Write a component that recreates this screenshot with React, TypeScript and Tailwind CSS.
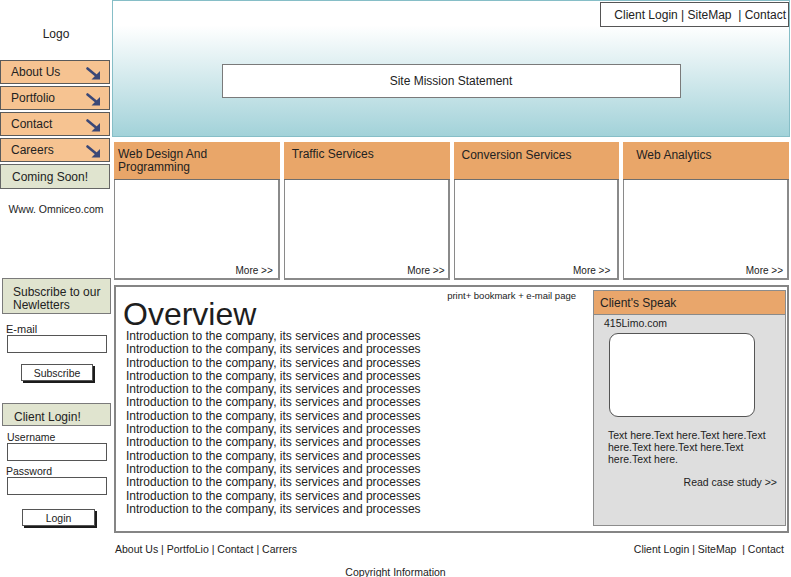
import React from 'react';

const navItems = ['About Us', 'Portfolio', 'Contact', 'Careers'];

const services = [
  { title: 'Web Design And Programming', head: 'pl-[4px] pr-[40px]', more: 'pr-[5px]' },
  { title: 'Traffic Services', head: 'pl-[8px]', more: 'pr-[3px]' },
  { title: 'Conversion Services', head: 'pl-[8px] pt-[7px]', more: 'pr-[7px]' },
  { title: 'Web Analytics', head: 'pl-[13px] pt-[7px]', more: 'pr-[4px]' },
];

const introLines = Array.from({ length: 14 }, () => 'Introduction to the company, its services and processes');

const NavArrow = () => (
  <svg width="15" height="13" viewBox="0 0 15 13" className="self-end mb-[3px]">
    <line x1="1.5" y1="1.5" x2="10" y2="8.5" stroke="#3b4877" strokeWidth="2.6" strokeLinecap="round" />
    <polygon points="14,4 14,12.5 5.5,12.5" fill="#3b4877" />
  </svg>
);

const Sidebar = () => (
  <aside className="w-[112px] shrink-0 flex flex-col text-[#222]">
    <div className="h-[60px] pt-[27px] text-center text-[12px] leading-[14px]">Logo</div>

    <nav className="flex flex-col gap-[2px]">
      {navItems.map((item) => (
        <a
          key={item}
          href="#"
          className="w-[110px] h-[24px] flex items-center justify-between pl-[10px] pr-[8px] bg-[#f6c391] border border-[#5a5a5a] text-[12px]"
        >
          <span>{item}</span>
          <NavArrow />
        </a>
      ))}
      <div className="w-[110px] h-[25px] flex items-center pl-[11px] bg-[#e0e4cf] border border-[#666] text-[12px]">
        Coming Soon!
      </div>
    </nav>

    <p className="mt-[14px] text-center text-[10.5px] leading-[12px]">Www. Omniceo.com</p>

    {/* newsletter signup */}
    <div className="mt-[63px] ml-[2px] w-[109px] h-[36px] pt-[7px] pl-[10px] bg-[#e0e4cf] border border-[#7a7a7a] text-[12px] leading-[13px]">
      Subscribe to our
      <br />
      Newletters
    </div>
    <label className="mt-[9px] ml-[6px] text-[11px] leading-[12px]">E-mail</label>
    <input className="ml-[7px] w-[100px] h-[18px] bg-white border border-[#555] outline-none" />
    <button className="mt-[11px] ml-[21px] w-[72px] h-[17px] bg-white border border-[#555] shadow-[2px_2px_0_#1c1c1c] text-[10.5px] leading-[14px]">
      Subscribe
    </button>

    {/* client login */}
    <div className="mt-[22px] ml-[2px] w-[109px] h-[23px] pt-[6px] pl-[11px] bg-[#e0e4cf] border border-[#7a7a7a] text-[12px] leading-[14px]">
      Client Login!
    </div>
    <label className="mt-[5px] ml-[7px] text-[10.5px] leading-[12px]">Username</label>
    <input className="ml-[7px] w-[100px] h-[18px] bg-white border border-[#555] outline-none" />
    <label className="mt-[4px] ml-[6px] text-[10.5px] leading-[12px]">Password</label>
    <input type="password" className="ml-[7px] w-[100px] h-[18px] bg-white border border-[#555] outline-none" />
    <button className="mt-[14px] ml-[22px] w-[73px] h-[17px] bg-white border border-[#555] shadow-[2px_2px_0_#1c1c1c] text-[10.5px] leading-[14px]">
      Login
    </button>
  </aside>
);

const Header = () => (
  <header className="h-[137px] flex flex-col border border-[#86bec7] bg-linear-to-b from-white from-[18%] to-[#a2d2d9]">
    <div className="flex justify-end mt-[1px]">
      <div className="w-[189px] h-[25px] flex items-center justify-end pr-[2px] border border-[#555] text-[12px] whitespace-pre">
        Client Login | SiteMap  | Contact
      </div>
    </div>
    <div className="mt-[37px] mx-auto w-[459px] h-[34px] flex items-center justify-center bg-white border border-[#7a7a7a] text-[12px]">
      Site Mission Statement
    </div>
  </header>
);

const ServiceCards = () => (
  <div className="mt-[5px] h-[138px] pl-[2px] pr-[1px] grid grid-cols-4 gap-[4px]">
    {services.map((s) => (
      <div key={s.title} className="flex flex-col">
        <div className={`h-[38px] pt-[6px] bg-[#e9a669] border-b border-[#6e6e6e] text-[12px] leading-[13px] ${s.head}`}>
          {s.title}
        </div>
        <div className={`flex-1 flex items-end justify-end pb-[1px] bg-white border-l border-r-2 border-b-2 border-[#8a8a8a] text-[10px] leading-[12px] ${s.more}`}>
          More &gt;&gt;
        </div>
      </div>
    ))}
  </div>
);

const ClientsSpeak = () => (
  <div className="w-[193px] mt-[3px] mb-[5px] mr-[1px] flex flex-col bg-[#dedede] border border-[#8c8c8c]">
    <div className="h-[24px] flex items-center pl-[6px] bg-[#e9a66b] border-b border-[#8a8a8a] text-[12px]">
      Client&apos;s Speak
    </div>
    <p className="mt-[2px] pl-[10px] text-[10.5px] leading-[12px]">415Limo.com</p>
    <div className="mt-[4px] ml-[15px] w-[146px] h-[84px] bg-white border border-[#555] rounded-[9px]" />
    <p className="mt-[12px] pl-[14px] w-[184px] text-[10.5px] leading-[12px]">
      Text here.Text here.Text here.Text here.Text here.Text here.Text here.Text here.
    </p>
    <p className="mt-[11px] pr-[8px] text-right text-[10.5px] leading-[12px]">Read case study &gt;&gt;</p>
  </div>
);

const Overview = () => (
  <section className="mt-[5px] h-[248px] ml-[2px] mr-[1px] flex border-2 border-[#858585]">
    <div className="flex-1 flex flex-col pl-[7px]">
      <div className="flex justify-between items-start">
        <h1 className="mt-[11px] text-[32px] leading-[32px] text-[#1e1e1e]">Overview</h1>
        <span className="mt-[3px] mr-[17px] text-[9.5px] leading-[11px]">print+ bookmark + e-mail page</span>
      </div>
      <div className="pl-[3px] text-[12px] leading-[13.3px]">
        {introLines.map((line, i) => (
          <p key={i}>{line}</p>
        ))}
      </div>
    </div>
    <ClientsSpeak />
  </section>
);

const App = () => {
  return (
    <div className="w-[791px] h-[577px] bg-white text-[#222] font-['Liberation_Sans',Arial,sans-serif] overflow-hidden">
      <div className="flex">
        <Sidebar />
        <main className="w-[678px] flex flex-col">
          <Header />
          <ServiceCards />
          <Overview />
        </main>
      </div>
      <footer className="mt-[10px] text-[10.5px] leading-[12px]">
        <div className="flex justify-between pl-[115px] pr-[7px]">
          <span>About Us | PortfoLio | Contact | Carrers</span>
          <span className="whitespace-pre">Client Login | SiteMap  | Contact</span>
        </div>
        <p className="mt-[11px] text-center">Copyright Information</p>
      </footer>
    </div>
  );
};

export default App;
